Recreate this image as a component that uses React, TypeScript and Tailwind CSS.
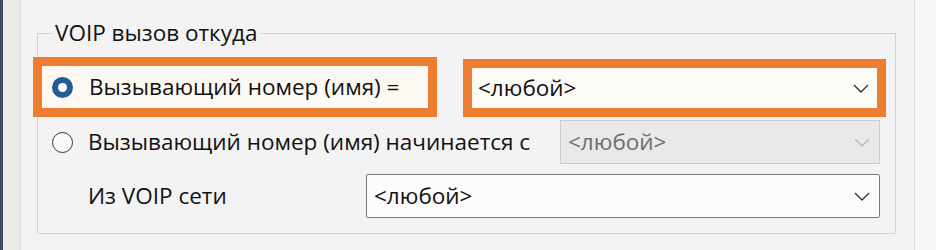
import React from "react";

const font = { fontFamily: '"Open Sans", "Noto Sans", sans-serif' };

function Chevron({ color = "#333" }: { color?: string }) {
  return (
    <svg width="16" height="9" viewBox="0 0 16 9" fill="none">
      <path d="M1 1l7 7 7-7" stroke={color} strokeWidth="1.4" />
    </svg>
  );
}

function Radio({ checked }: { checked?: boolean }) {
  if (checked) {
    return (
      <span className="flex h-[21px] w-[21px] shrink-0 items-center justify-center rounded-full bg-[#235d95]">
        <span className="block h-[9px] w-[9px] rounded-full bg-white" />
      </span>
    );
  }
  return <span className="block h-[21px] w-[21px] shrink-0 rounded-full border-[1.5px] border-[#333] bg-[#fafafa]" />;
}

export default function App() {
  return (
    <div className="flex h-[250px] w-[936px] overflow-hidden bg-[#f0f0f0] text-[22.5px] text-[#111]" style={font}>
      <div className="w-[3px] bg-[#3b4d61]" />
      <div className="w-[17px] bg-[#ececec]" />
      <div className="flex-1 border-l border-[#dedede] bg-[#f3f3f3] pl-[16px] pr-[18px]">
        <fieldset className="mt-[19px] h-[215px] border border-[#d4d4d4] px-0 pb-0">
          <legend className="ml-[14px] px-[3px] leading-[28px]">VOIP вызов откуда</legend>

          <div className="mt-[10px] flex items-end">
            <div className="ml-[-5px] flex h-[60px] w-[404px] items-center border-[9px] border-[#ed7d31] bg-[#fdf9f2] pl-[10px]">
              <Radio checked />
              <span className="ml-[16px] leading-none">Вызывающий номер (имя) =</span>
            </div>
            <div className="ml-[26px] flex h-[58px] w-[423px] items-center justify-between border-[9px] border-[#ed7d31] bg-[#fdfbf7] pl-[6px] pr-[8px]">
              <span className="leading-none">&lt;любой&gt;</span>
              <Chevron />
            </div>
          </div>

          <div className="mt-[3px] flex h-[44px] items-center">
            <span className="ml-[14px] block">
              <Radio />
            </span>
            <span className="ml-[15px] leading-none">Вызывающий номер (имя) начинается с</span>
            <div className="ml-auto mr-[15px] flex h-[44px] w-[320px] items-center justify-between border border-[#cbcbcb] bg-[#e9e9e9] pl-[7px] pr-[9px] text-[#6e6e6e]">
              <span className="leading-none">&lt;любой&gt;</span>
              <Chevron color="#b5b5b5" />
            </div>
          </div>

          <div className="mt-[10px] flex h-[44px] items-center">
            <span className="ml-[50px] leading-none">Из VOIP сети</span>
            <div className="ml-auto mr-[15px] flex h-[44px] w-[514px] items-center justify-between rounded-[2px] border-[1.5px] border-[#7a7a7a] bg-[#fcfcfc] pl-[7px] pr-[9px]">
              <span className="leading-none">&lt;любой&gt;</span>
              <Chevron />
            </div>
          </div>
        </fieldset>
      </div>
      <div className="w-[22px] border-l border-[#dadada] bg-[#f6f6f6]" />
    </div>
  );
}
